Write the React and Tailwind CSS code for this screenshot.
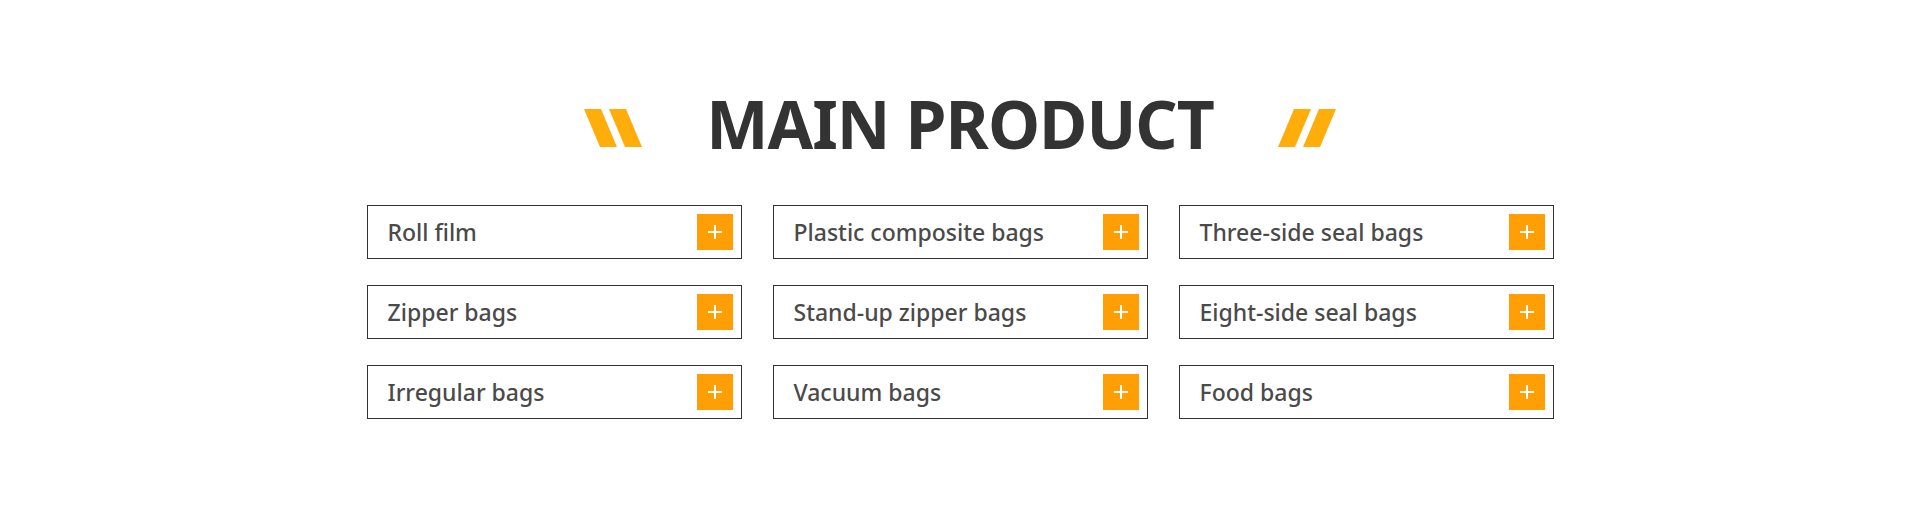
const products = [
  'Roll film',
  'Plastic composite bags',
  'Three-side seal bags',
  'Zipper bags',
  'Stand-up zipper bags',
  'Eight-side seal bags',
  'Irregular bags',
  'Vacuum bags',
  'Food bags',
];

function Slashes({ flip }) {
  return (
    <svg width="58" height="38" viewBox="0 0 58 38" className="mt-[9px] shrink-0">
      {flip ? (
        <g fill="#ffad0a">
          <polygon points="16,0 33,0 17,38 0,38" />
          <polygon points="41,0 58,0 42,38 25,38" />
        </g>
      ) : (
        <g fill="#ffad0a">
          <polygon points="0,0 17,0 33,38 16,38" />
          <polygon points="25,0 42,0 58,38 41,38" />
        </g>
      )}
    </svg>
  );
}

function PlusButton() {
  return (
    <div className="relative h-9 w-9 shrink-0 bg-[#ff9f05]">
      <span className="absolute left-[11px] top-[17px] h-[2px] w-[14px] bg-white" />
      <span className="absolute left-[17px] top-[11px] h-[14px] w-[2px] bg-white" />
    </div>
  );
}

export default function App() {
  return (
    <div className="h-[509px] w-full bg-white font-['Noto_Sans',sans-serif]">
      <div className="flex flex-col items-center pt-[90px]">
        <div className="flex items-center gap-[64px]">
          <Slashes />
          <h1 className="text-[66px] font-bold leading-none tracking-[-1px] text-[#333333]">MAIN PRODUCT</h1>
          <Slashes flip />
        </div>

        <div className="mt-[49px] grid grid-cols-[repeat(3,375px)] gap-x-[31px] gap-y-[26px]">
          {products.map((name) => (
            <div
              key={name}
              className="flex h-[54px] items-center justify-between border border-[#333333] pl-5 pr-2"
            >
              <span className="text-[23px] font-medium text-[#4a4a4a]">{name}</span>
              <PlusButton />
            </div>
          ))}
        </div>
      </div>
    </div>
  );
}
